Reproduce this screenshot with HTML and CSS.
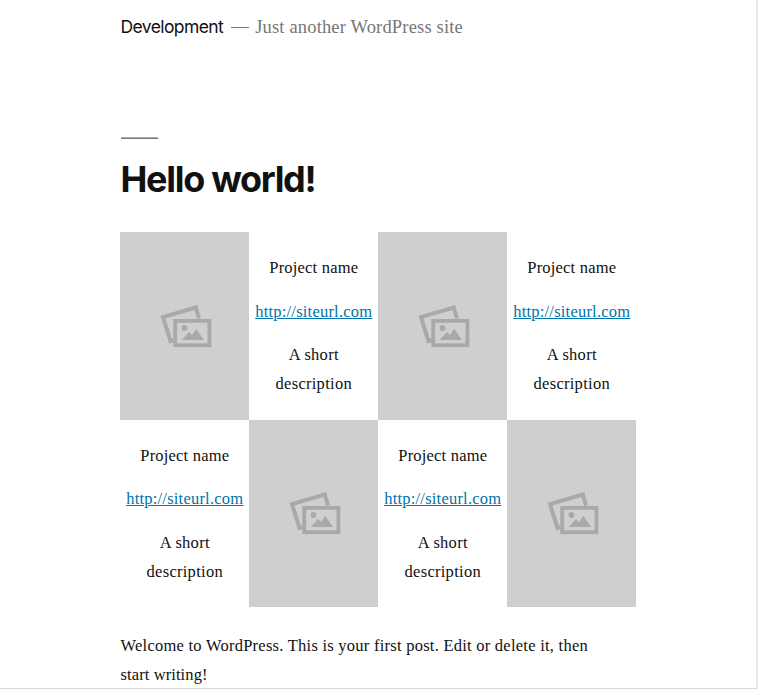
FILE: index.html
```html
<!DOCTYPE html>
<html lang="en">
<head>
<meta charset="utf-8">
<title>Development</title>
<link rel="stylesheet" href="styles.css">
</head>
<body>
<svg class="defs" width="0" height="0" aria-hidden="true">
  <symbol id="photos" viewBox="0 0 52 44">
    <path d="M14.5 36 L10.5 37 L3 13.2 L35.8 3.6 L39 14.5" fill="none" stroke="#a9a9a9" stroke-width="4"/>
    <rect x="13.5" y="15" width="38" height="28" fill="#cfcfcf"/>
    <rect x="15.2" y="16.9" width="34.2" height="24.3" fill="#cfcfcf" stroke="#a9a9a9" stroke-width="3.8"/>
    <circle cx="24.5" cy="24" r="2.9" fill="#a9a9a9"/>
    <path d="M21.7 36 L29 28 L32 31.2 L36.2 24.8 L44 36 Z" fill="#a9a9a9"/>
  </symbol>
</svg>
<div class="page">
  <header class="site-header">
    <span class="site-title">Development</span>
    <span class="dash"></span>
    <span class="tagline">Just another WordPress site</span>
  </header>
  <main class="content">
    <div class="rule"></div>
    <h1 class="entry-title">Hello world!</h1>
    <div class="projects">
      <div class="photo"><svg class="icon"><use href="#photos"/></svg></div>
      <div class="details"><p class="name">Project name</p><p class="url"><a href="#">http://siteurl.com</a></p><p class="about">A short<br>description</p></div>
      <div class="photo"><svg class="icon"><use href="#photos"/></svg></div>
      <div class="details"><p class="name">Project name</p><p class="url"><a href="#">http://siteurl.com</a></p><p class="about">A short<br>description</p></div>
      <div class="details"><p class="name">Project name</p><p class="url"><a href="#">http://siteurl.com</a></p><p class="about">A short<br>description</p></div>
      <div class="photo"><svg class="icon"><use href="#photos"/></svg></div>
      <div class="details"><p class="name">Project name</p><p class="url"><a href="#">http://siteurl.com</a></p><p class="about">A short<br>description</p></div>
      <div class="photo"><svg class="icon"><use href="#photos"/></svg></div>
    </div>
    <p class="intro">Welcome to WordPress. This is your first post. Edit or delete it, then<br><span class="intro-end">start writing!</span></p>
  </main>
</div>
</body>
</html>
```
FILE: styles.css
```css
* { box-sizing: border-box; }
body {
  margin: 0;
  background: #fff;
  color: #111;
  font-family: "Liberation Serif", serif;
  font-size: 16.5px;
  line-height: 29px;
}
p, h1 { margin: 0; }
.defs { display: block; }
.page {
  height: 689px;
  overflow: hidden;
  padding: 12px 0 0 120.5px;
  border-right: 2px solid #e9e9e9;
  border-bottom: 1px solid #d8d8d8;
}
.site-header { display: flex; align-items: center; height: 30px; }
.site-title {
  font: 400 17.5px/30px Inter, sans-serif;
  letter-spacing: -0.6px;
}
.dash { width: 18px; height: 1px; margin: 0 6px 0 8px; background: #767676; }
.tagline { color: #767676; font-size: 18.5px; letter-spacing: 0.17px; }
.content { width: 516px; padding-top: 95px; }
.rule { width: 37px; height: 2px; background: linear-gradient(#b0b0b0 50%, #767676 50%); }
.entry-title {
  margin-top: 17px;
  font: 700 36px/46px Inter, sans-serif;
  letter-spacing: -1.3px;
}
.projects {
  display: grid;
  grid-template-columns: repeat(4, 129px);
  grid-auto-rows: 187.5px;
  margin: 30px 0 23.5px -0.5px;
}
.photo {
  display: flex;
  align-items: center;
  justify-content: center;
  padding-left: 2px;
  background: #cfcfcf;
}
.icon { width: 52px; height: 44px; }
.details {
  display: flex;
  flex-direction: column;
  justify-content: center;
  gap: 14.5px;
  padding: 0 0 0.4px 0.5px;
  text-align: center;
  white-space: nowrap;
}
.name { letter-spacing: 0.2px; }
.url { letter-spacing: 0.22px; }
.url a { color: #0073aa; text-decoration: underline; }
.about { letter-spacing: 0.28px; }
.intro { white-space: nowrap; letter-spacing: 0.25px; }
.intro-end { letter-spacing: 0.1px; }
```
